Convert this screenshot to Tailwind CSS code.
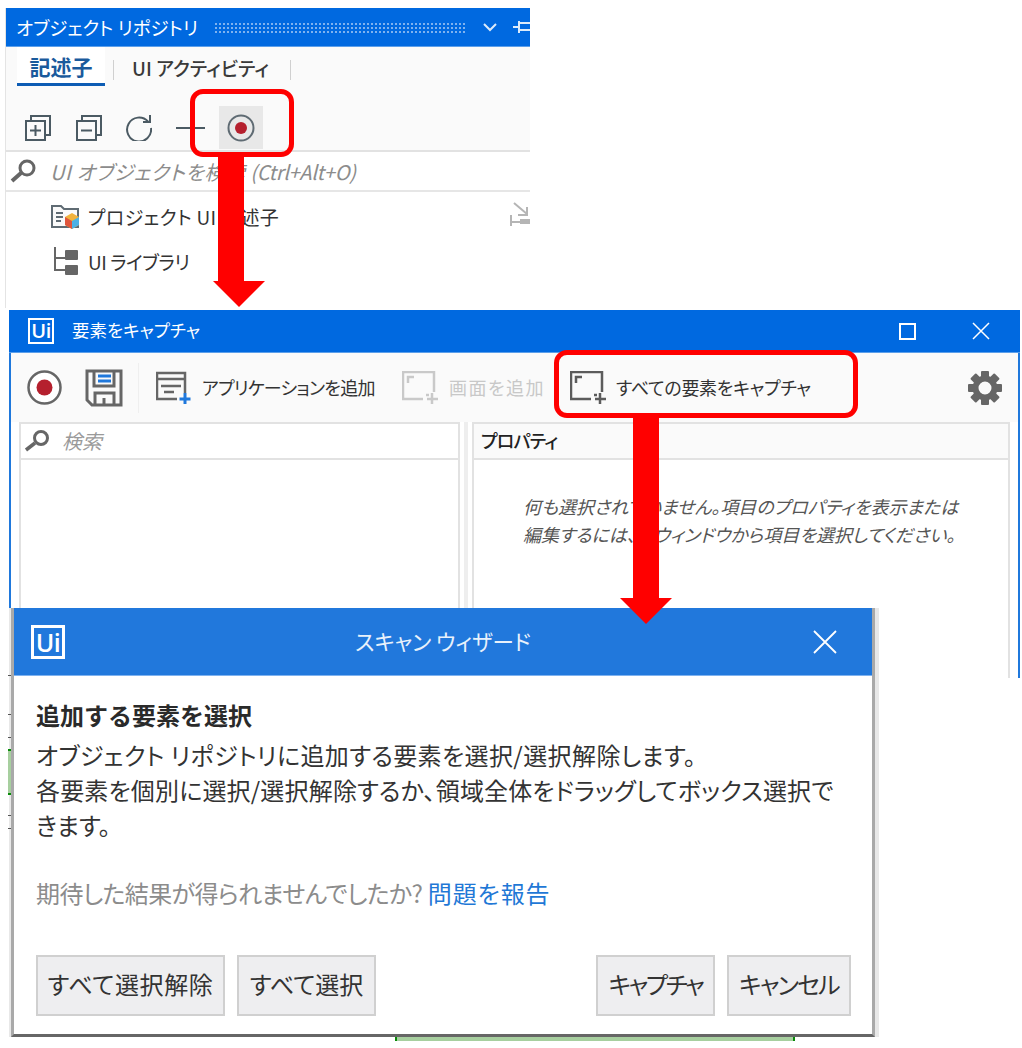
<!DOCTYPE html>
<html lang="ja">
<head>
<meta charset="utf-8">
<script src="https://cdn.jsdelivr.net/npm/@tailwindcss/browser@4"></script>
</head>
<body class="bg-white">
<div class="relative w-[1022px] h-[1048px] overflow-hidden bg-white font-['Noto_Sans_CJK_JP','Noto_Sans',sans-serif] [font-feature-settings:'palt'] text-[#333]">

  <!-- panel 1: object repository -->
  <section class="absolute left-[5px] top-[8px] w-[525px] h-[300px] border-l border-[#e4e4e4] flex flex-col bg-white">
    <header class="h-[39px] bg-[#0069e0] border-b border-[#5c9fea] flex items-center pl-[10px] text-white">
      <span class="text-[18.500px] leading-none whitespace-nowrap w-[198px] pt-[1px]">オブジェクト リポジトリ</span>
      <div class="w-[251px] h-[11px] bg-[radial-gradient(#7fb2ef_1px,transparent_1px)] bg-[length:4px_4px]"></div>
      <svg class="ml-[18px] w-[14px] h-[9px]" viewBox="0 0 14 9" fill="none" stroke="#dcebfb" stroke-width="2"><path d="M1 1l6 6 6-6"/></svg>
      <svg class="ml-[16px] w-[17px] h-[14px]" viewBox="0 0 17 14" fill="none" stroke="#dcebfb" stroke-width="2"><path d="M0 7h6M6 1v12M6 3h11M6 10h11"/></svg>
    </header>
    <div class="h-[105px] bg-[#fafafa] border-b-2 border-[#e2e2e2] flex flex-col">
      <div class="h-[39px] flex items-start pl-[11px]">
        <div class="w-[88px] h-[39px] border-b-[3px] border-[#0d5cb4] bg-white flex items-center justify-center text-[21px] font-bold text-[#1a5a9c] leading-none pt-[3px]">記述子</div>
        <div class="ml-[8px] mt-[13px] w-px h-[20px] bg-[#d0d0d0]"></div>
        <div class="ml-[18px] w-[137px] h-[39px] flex items-center text-[19px] font-medium text-[#3a3a3a] leading-none whitespace-nowrap pt-[1px]">UI アクティビティ</div>
        <div class="ml-[21px] mt-[13px] w-px h-[20px] bg-[#d0d0d0]"></div>
      </div>
      <div class="mt-[20px] h-[43px] flex items-center pl-[19px]">
        <svg class="w-[26px] h-[26px]" viewBox="0 0 26 26" fill="none" stroke="#4b5a63" stroke-width="2"><path d="M6 5V1h19v19h-4"/><rect x="1" y="6" width="19" height="19"/><path d="M10.500 10v11M5 15.500h11"/></svg>
        <svg class="ml-[25px] w-[26px] h-[26px]" viewBox="0 0 26 26" fill="none" stroke="#4b5a63" stroke-width="2"><path d="M6 5V1h19v19h-4"/><rect x="1" y="6" width="19" height="19"/><path d="M5 15.500h11"/></svg>
        <svg class="ml-[24px] w-[26px] h-[26px]" viewBox="0 0 26 26" fill="none" stroke="#4b5a63" stroke-width="2"><path d="M22 6.500A12 12 0 1 0 25 13"/><path d="M24 0v7h-7"/></svg>
        <div class="ml-[24px] w-[29px] h-[2px] bg-[#4b5a63]"></div>
        <div class="ml-[14px] w-[44px] h-[43px] bg-[#e8e8e8] flex items-center justify-center">
          <svg class="w-[28px] h-[28px]" viewBox="0 0 28 28"><circle cx="14" cy="14" r="12.500" fill="none" stroke="#5f6b73" stroke-width="2"/><circle cx="14" cy="14" r="6" fill="#b5202e"/></svg>
        </div>
      </div>
    </div>
    <div class="h-[40px] border-b-2 border-[#e6e6e6] flex items-center pl-[4px]">
      <svg class="w-[27px] h-[24px]" viewBox="0 0 27 24" fill="none" stroke="#666" ><circle cx="17" cy="9" r="7" stroke-width="3"/><path d="M11 14l-9 8" stroke-width="4"/></svg>
      <span class="ml-[13px] italic text-[20px] leading-none text-[#8c8c8c] whitespace-nowrap pt-[1px]"><span class="tracking-[0.6px]">UI オブジェクトを検索</span> <span class="tracking-[-0.3px]">(Ctrl+Alt+O)</span></span>
    </div>
    <ul class="relative flex-1 text-[#333] text-[19px] leading-none">
      <li class="h-[46px] flex items-center pl-[45px] pt-[3px]">
        <svg class="w-[29px] h-[26px]" viewBox="0 0 29 26"><path d="M1 23V2h9l3 3h14v18z" fill="#fafafa" stroke="#5f6b73" stroke-width="2"/><path d="M5 9h7M5 13h7M5 17h5" stroke="#5f6b73" stroke-width="2"/><path d="M21 9l7 4v8l-7 4-7-4v-8z" fill="#f2b33d"/><path d="M21 17l7-4v8l-7 4z" fill="#4cb1e6"/><path d="M21 17l-7-4v8l7 4z" fill="#e0563c"/></svg>
        <span class="ml-[8px] whitespace-nowrap tracking-[0.35px]">プロジェクト UI 記述子</span>
      </li>
      <li class="h-[46px] flex items-center pl-[47px]">
        <svg class="w-[25px] h-[28px]" viewBox="0 0 25 28" fill="none" stroke="#666" stroke-width="2"><path d="M2 0v23h10M2 11h10"/><rect x="12" y="3" width="13" height="10" rx="1" fill="#666" stroke="none"/><rect x="12" y="18" width="13" height="10" rx="1" fill="#666" stroke="none"/></svg>
        <span class="ml-[10px] whitespace-nowrap tracking-[-0.5px] pt-[1px]">UI ライブラリ</span>
      </li>
      <svg class="absolute left-[504px] top-[10px] w-[20px] h-[25px]" viewBox="0 0 20 25" fill="none" stroke="#b5b5b5" stroke-width="2"><path d="M4 1l13 11M17 5v8H8M1 13v11M1 20h9"/><rect x="10" y="17" width="10" height="5" fill="#b5b5b5" stroke="none"/></svg>
    </ul>
  </section>

  <!-- window 2: capture elements -->
  <section class="absolute left-[9px] top-[310px] w-[1011px] h-[368px] border-l-2 border-r-2 border-[#1f78dc] bg-white flex flex-col">
    <header class="h-[43px] -mx-[2px] bg-[#0069e0] border-b border-[#5c9fea] flex items-center pl-[19px] text-white shrink-0">
      <div class="w-[26px] h-[26px] border-2 border-white flex items-center justify-center text-[20px] font-semibold leading-none font-['Open_Sans',sans-serif] tracking-[-0.5px]">Ui</div>
      <span class="ml-[18px] text-[17.500px] leading-none whitespace-nowrap pb-[3px]">要素をキャプチャ</span>
      <div class="ml-auto w-[17px] h-[17px] border-2 border-white"></div>
      <svg class="ml-[56px] mr-[30px] w-[18px] h-[18px]" viewBox="0 0 18 18" stroke="white" stroke-width="1.500"><path d="M1 1l16 16M17 1L1 17"/></svg>
    </header>
    <div class="h-[69px] bg-[#fafafa] flex items-center pl-[16px] text-[18px] leading-none shrink-0">
      <svg class="w-[35px] h-[35px]" viewBox="0 0 35 35"><circle cx="17.500" cy="17.500" r="16" fill="#fff" stroke="#666" stroke-width="2.500"/><circle cx="17.500" cy="17.500" r="8" fill="#b5202e"/></svg>
      <svg class="ml-[23px] w-[38px] h-[38px]" viewBox="0 0 38 38" fill="none" stroke="#666" stroke-width="3"><path d="M2 2h34v34H7l-5-5z"/><path d="M9 2v15h20V2M10 36V24h19v12M19 29v7"/><path d="M13 7h13M13 12h13" stroke="#1f78dc"/></svg>
      <div class="ml-[15px] w-px h-[50px] bg-[#efefef]"></div>
      <svg class="ml-[17px] w-[36px] h-[34px]" viewBox="0 0 36 34" fill="none"><path d="M29 22V2H1v26h20M1 8h28M5 15h20M8 21h10" stroke="#666" stroke-width="2.500"/><path d="M29 22v11M23.500 28h11" stroke="#1f78dc" stroke-width="3"/></svg>
      <span class="ml-[10px] whitespace-nowrap w-[172px] text-[#333] tracking-[-0.75px] pb-[1px]">アプリケーションを追加</span>
      <svg class="ml-[28px] w-[36px] h-[34px]" viewBox="0 0 36 34" fill="none" stroke="#c9c9c9" stroke-width="2.500"><path d="M21 28H1V1h31v20"/><path d="M6 12V6h6"/><path d="M24 24h3M30 22v11M25 28h11"/></svg>
      <span class="ml-[11px] whitespace-nowrap w-[95px] text-[#c8c8c8] tracking-[1.500px] pb-[1px]">画面を追加</span>
      <svg class="ml-[26px] w-[36px] h-[34px]" viewBox="0 0 36 34" fill="none" stroke="#5c5c5c" stroke-width="2.500"><path d="M21 28H1V1h31v20"/><path d="M6 12V6h6"/><path d="M24 24h3M30 22v11M25 28h11"/></svg>
      <span class="ml-[10px] whitespace-nowrap text-[#333] tracking-[-0.3px] pb-[1px]">すべての要素をキャプチャ</span>
      <svg class="ml-auto mr-[16px] w-[34px] h-[34px]" viewBox="0 0 34 34" fill="#666">
        <circle cx="17" cy="17" r="9.500" fill="none" stroke="#666" stroke-width="6"/>
        <rect x="13" y="0" width="8" height="8" rx="1"/>
        <rect x="13" y="26" width="8" height="8" rx="1"/>
        <rect x="0" y="13" width="8" height="8" rx="1"/>
        <rect x="26" y="13" width="8" height="8" rx="1"/>
        <rect x="13" y="0" width="8" height="8" rx="1" transform="rotate(45 17 17)"/>
        <rect x="13" y="26" width="8" height="8" rx="1" transform="rotate(45 17 17)"/>
        <rect x="0" y="13" width="8" height="8" rx="1" transform="rotate(45 17 17)"/>
        <rect x="26" y="13" width="8" height="8" rx="1" transform="rotate(45 17 17)"/>
      </svg>
    </div>
    <div class="flex-1 flex pl-[8px] pr-[8px] bg-white">
      <div class="w-[441px] border-2 border-b-0 border-[#e2e2e2] flex flex-col">
        <div class="h-[36px] border-b-2 border-[#e2e2e2] flex items-center pl-[3px]">
          <svg class="w-[27px] h-[22px]" viewBox="0 0 27 22" fill="none" stroke="#666"><circle cx="17" cy="8" r="6.500" stroke-width="3"/><path d="M11 13l-9 7" stroke-width="3.500"/></svg>
          <span class="ml-[11px] italic text-[20px] leading-none text-[#9a9a9a]">検索</span>
        </div>
      </div>
      <div class="w-[12px] flex justify-center"><div class="w-[4px] h-full bg-[#eeeeee]"></div></div>
      <div class="flex-1 border-2 border-b-0 border-[#e2e2e2] flex flex-col">
        <div class="h-[36px] border-b-2 border-[#e2e2e2] bg-[#fafafa] flex items-center pl-[7px] text-[18px] font-medium leading-none text-[#222] tracking-[-0.8px] pb-[2px]">プロパティ</div>
        <p class="pt-[32px] pl-[49px] italic text-[18px] leading-[28px] text-[#555] whitespace-nowrap">何も選択されていません。項目のプロパティを表示または<br>編集するには、左ウィンドウから項目を選択してください。</p>
      </div>
    </div>
  </section>

  <!-- dialog 3: scan wizard -->
  <section class="absolute left-[9px] top-[608px] w-[870px] h-[429px] bg-[#e8e8e8]">
    <div class="ml-[2px] mr-[4px] h-[429px] border-x-[3px] border-b-[3px] border-[#a9a9a9] border-b-[#666] bg-white flex flex-col">
      <header class="relative h-[68px] bg-[#2178dc] border-b border-[#7fb2ef] flex items-center justify-center text-white shrink-0">
        <div class="absolute left-[17px] top-[17px] w-[34px] h-[34px] border-[3px] border-white flex items-center justify-center text-[25px] font-semibold leading-none font-['Open_Sans',sans-serif] tracking-[-0.5px]">Ui</div>
        <span class="text-[21.500px] leading-none whitespace-nowrap text-[#e8f1fb] pb-[2px]">スキャン ウィザード</span>
        <svg class="absolute right-[35px] top-[22px] w-[24px] h-[24px]" viewBox="0 0 24 24" stroke="white" stroke-width="1.800"><path d="M1 1l22 22M23 1L1 23"/></svg>
      </header>
      <div class="flex-1 flex flex-col px-[22px] text-[24px] leading-[35px] text-[#333]">
        <h2 class="mt-[21px] font-bold text-[#2a2a2a] leading-[35px] text-[24px] [font-feature-settings:normal]">追加する要素を選択</h2>
        <p class="mt-[5px] whitespace-nowrap">
          <span class="tracking-[0.4px]">オブジェクト リポジトリに追加する要素を選択/選択解除します。</span><br>
          <span class="tracking-[0.17px]">各要素を個別に選択/選択解除するか、領域全体をドラッグしてボックス選択で</span><br>きます。</p>
        <p class="mt-[33px] text-[#8c8c8c] whitespace-nowrap"><span class="tracking-[-0.6px]">期待した結果が得られませんでしたか?</span> <span class="text-[#1f78d6] tracking-[0.9px]">問題を報告</span></p>
        <div class="mt-[45px] flex text-[24px] leading-none text-[#333]">
          <button class="w-[189px] h-[61px] bg-[#eeeef0] border-2 border-[#d0d0d0] pb-[3px] tracking-[0.6px]">すべて選択解除</button>
          <button class="ml-[12px] w-[139px] h-[61px] bg-[#eeeef0] border-2 border-[#d0d0d0] pb-[3px]">すべて選択</button>
          <button class="ml-auto w-[119px] h-[61px] bg-[#eeeef0] border-2 border-[#d0d0d0] pb-[3px] tracking-[-2.300px]">キャプチャ</button>
          <button class="ml-[12px] mr-[-1px] w-[124px] h-[61px] bg-[#eeeef0] border-2 border-[#d0d0d0] pb-[3px] tracking-[-1.800px]">キャンセル</button>
        </div>
      </div>
    </div>
  </section>

  <!-- fragments of the screen behind the dialog -->
  <div class="absolute left-[395px] top-[1037px] w-[400px] h-[4px] bg-[#a7cf9f] border-x-2 border-[#0a8a0a]"></div>
  <div class="absolute left-[8px] top-[749px] w-[3px] h-[46px] bg-[#a7cf9f] border-y-2 border-[#0a8a0a]"></div>
  <div class="absolute left-[8px] top-[675px] w-[3px] h-px bg-[#555]"></div>
  <div class="absolute left-[8px] top-[714px] w-[3px] h-px bg-[#555]"></div>
  <div class="absolute left-[8px] top-[737px] w-[3px] h-px bg-[#555]"></div>
  <div class="absolute left-[8px] top-[815px] w-[3px] h-px bg-[#555]"></div>
  <div class="absolute left-[8px] top-[828px] w-[3px] h-px bg-[#555]"></div>

  <!-- annotations -->
  <div class="absolute left-[190px] top-[89px] w-[104px] h-[68px] border-[5px] border-[#ff0000] rounded-[13px]"></div>
  <div class="absolute left-[218px] top-[155px] w-[26px] h-[127px] bg-[#ff0000]"></div>
  <div class="absolute left-[213px] top-[281px] w-0 h-0 border-x-[26px] border-x-transparent border-t-[26px] border-t-[#ff0000]"></div>
  <div class="absolute left-[554px] top-[350px] w-[304px] h-[68px] border-[5px] border-[#ff0000] rounded-[13px]"></div>
  <div class="absolute left-[633px] top-[416px] w-[26px] h-[182px] bg-[#ff0000]"></div>
  <div class="absolute left-[620px] top-[598px] w-0 h-0 border-x-[26px] border-x-transparent border-t-[26px] border-t-[#ff0000]"></div>
</div>
</body>
</html>
